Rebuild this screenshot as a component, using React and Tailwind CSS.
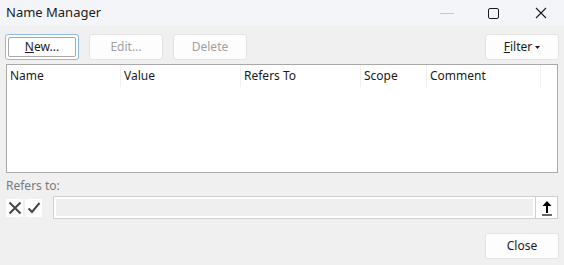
import { useState } from 'react';

const COLUMNS = [
  { label: 'Name', w: 'w-[114px]' },
  { label: 'Value', w: 'w-[120px]' },
  { label: 'Refers To', w: 'w-[120px]' },
  { label: 'Scope', w: 'w-[66px]' },
  { label: 'Comment', w: 'w-[114px]' },
];

function DlgButton({ children, disabled, focused, className = '' }) {
  return (
    <button
      className={
        'h-[26px] w-[74px] rounded-[3px] text-[12px] leading-none flex items-center justify-center ' +
        (focused
          ? 'border border-[#8fb8e3] bg-white p-[2px] text-[#1b1b1b] '
          : 'border border-[#e3e3e3] bg-[#fdfdfd] ' + (disabled ? 'text-[#a0a0a0] ' : 'text-[#1b1b1b] ')) +
        className
      }
    >
      {focused ? (
        <span className="w-full h-full border border-[#a8a8a8] rounded-[2px] flex items-center justify-center">{children}</span>
      ) : (
        children
      )}
    </button>
  );
}

export default function App() {
  const [refersTo] = useState('');

  return (
    <div className="w-[564px] h-[265px] bg-[#f0f0f0] flex flex-col overflow-hidden" style={{ fontFamily: '"Noto Sans", "Open Sans", sans-serif' }}>
      {/* title bar */}
      <div className="h-[26px] bg-[#f3f5f9] flex items-center pl-[6px] shrink-0">
        <span className="text-[13px] text-[#1b1b1b] flex-1">Name Manager</span>
        <div className="w-[14px] h-px bg-[#c8c8c8] mr-[34px]" />
        <div className="w-[11px] h-[11px] border border-[#1b1b1b] rounded-[2px] mr-[36px]" />
        <svg width="12" height="12" viewBox="0 0 12 12" className="mr-[17px]">
          <path d="M1 1 L11 11 M11 1 L1 11" stroke="#1b1b1b" strokeWidth="1.1" />
        </svg>
      </div>

      {/* toolbar */}
      <div className="flex items-center px-[5px] mt-[8px] gap-[10px]">
        <DlgButton focused><span><span className="underline">N</span>ew...</span></DlgButton>
        <DlgButton disabled>Edit...</DlgButton>
        <DlgButton disabled>Delete</DlgButton>
        <div className="flex-1" />
        <DlgButton className="w-[73px]">
          <span className="flex items-center gap-[3px]">
            <span><span className="underline">F</span>ilter</span>
            <svg width="5" height="3" viewBox="0 0 5 3"><path d="M0 0 H5 L2.5 3 Z" fill="#1b1b1b" /></svg>
          </span>
        </DlgButton>
      </div>

      {/* list */}
      <div className="mx-[6px] mt-[4px] h-[109px] border border-[#a9a9a9] bg-white flex flex-col">
        <div className="flex h-[22px] items-center text-[12px] text-[#1b1b1b]">
          {COLUMNS.map((c) => (
            <div key={c.label} className={c.w + ' h-full flex items-center pl-[3px] border-r border-[#f0f0f0]'}>
              {c.label}
            </div>
          ))}
          <div className="flex-1" />
        </div>
      </div>

      {/* refers to */}
      <div className="px-[6px] mt-[4px] text-[12px] text-[#7a7a7a]">Refers to:</div>
      <div className="flex items-center px-[6px] mt-[1px]">
        <div className="w-[17px] h-[18px] bg-white flex items-center justify-center">
          <svg width="14" height="14" viewBox="0 0 14 14">
            <path d="M1.5 1.5 L12.5 12.5 M12.5 1.5 L1.5 12.5" stroke="#444" strokeWidth="2" />
          </svg>
        </div>
        <div className="w-[17px] h-[18px] bg-white flex items-center justify-center ml-[2px]">
          <svg width="14" height="14" viewBox="0 0 14 14">
            <path d="M1.5 7.5 L5 11 L12.5 2" stroke="#444" strokeWidth="2" fill="none" />
          </svg>
        </div>
        <div className="ml-[11px] flex-1 h-[23px] border border-[#cfcfcf] bg-white flex items-center">
          <div className="flex-1 h-[17px] mx-[2px] bg-[#efefef]">{refersTo}</div>
          <div className="w-[22px] h-full border-l border-[#cfcfcf] flex items-center justify-center">
            <svg width="12" height="17" viewBox="0 0 12 17">
              <path d="M6 14 V4" stroke="#000" strokeWidth="2" />
              <path d="M1.5 7 L6 2 L10.5 7 Z" fill="#000" />
              <path d="M1 16 H11" stroke="#000" strokeWidth="1.2" />
            </svg>
          </div>
        </div>
      </div>

      {/* footer */}
      <div className="flex justify-end px-[5px] mt-[14px]">
        <DlgButton>Close</DlgButton>
      </div>
    </div>
  );
}
